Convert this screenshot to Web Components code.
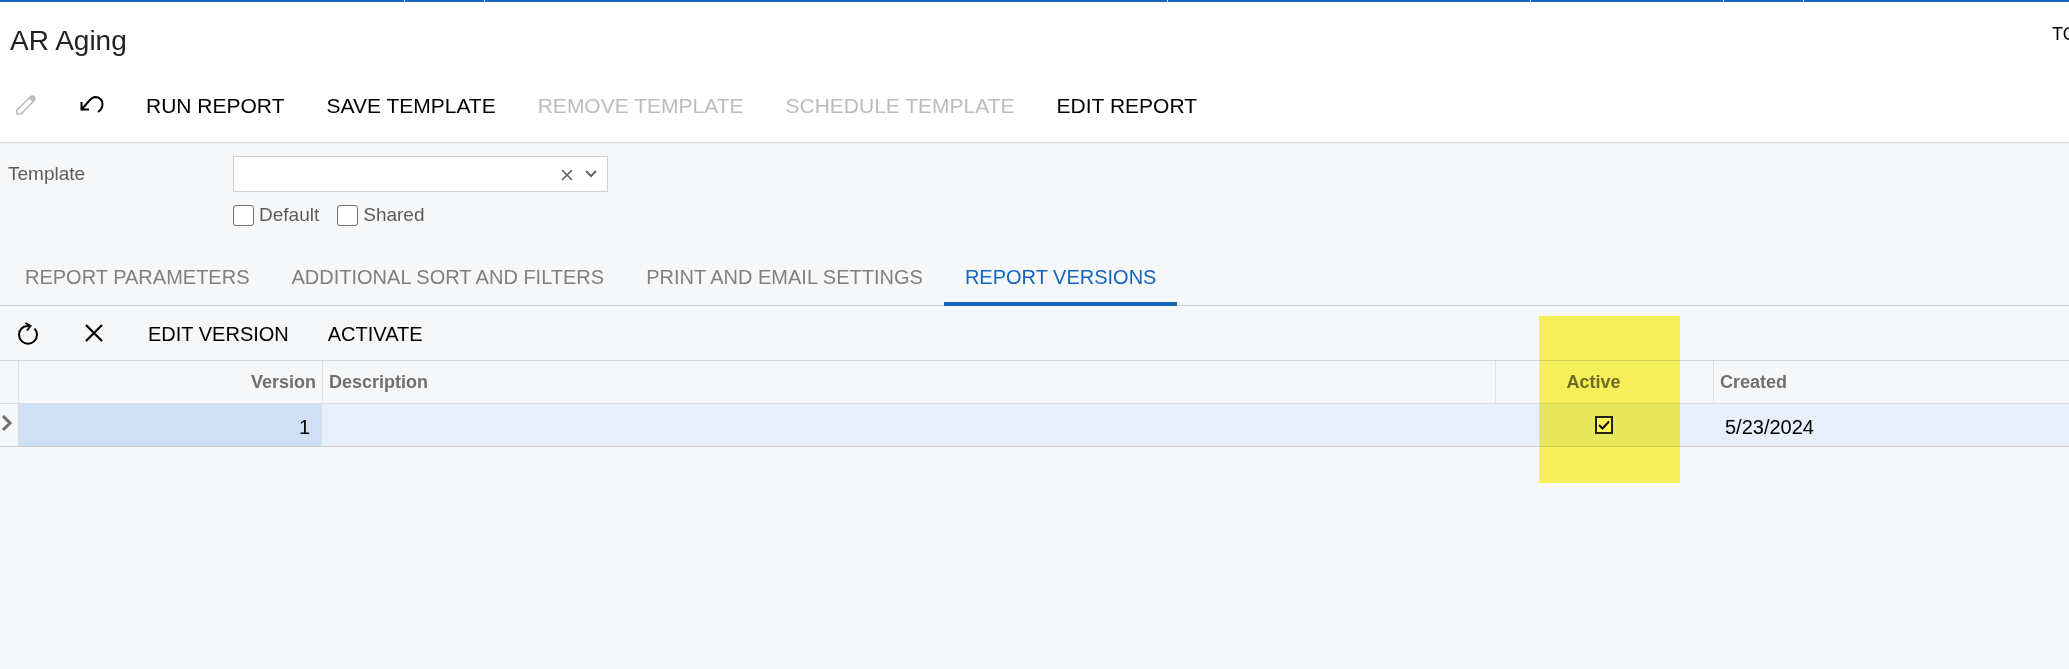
<!DOCTYPE html>
<html lang="en">
<head>
<meta charset="utf-8">
<title>AR Aging</title>
<style>
  html { height: 100%; }
  body {
    margin: 0; min-height: 100%; overflow-x: hidden;
    background: #f6f7f9; color: #000;
    font: 20px/24px "Liberation Sans", Arial, sans-serif;
  }
</style>
</head>
<body>
<report-screen></report-screen>
<script>
const define = (name, html, setup) => {
  const template = document.createElement('template');
  template.innerHTML = html;
  customElements.define(name, class extends HTMLElement {
    constructor() {
      super();
      this.attachShadow({ mode: 'open' }).append(template.content.cloneNode(true));
    }
    connectedCallback() { if (setup) setup(this, this.shadowRoot); }
  });
};

const icons = {
  pencil: '<path d="M1 19V15L14.500 1.800Q16.500 .200 18.200 1.800Q19.800 3.500 18.200 5.500L5 19Z" fill="none" stroke-width="1.600"/><path d="M13 3.300L15 1.300Q17 0 18.700 1.500Q20 3.500 18.700 5L16.700 7Z" stroke="none" fill="currentColor"/>',
  undo: '<path d="M1.500 6V13.500H9M2 13L9 5Q12 1.200 15.500 1A7 7 0 0 1 22.500 8Q22.500 13 18 16" fill="none" stroke-width="2"/>',
  refresh: '<path d="M12 4Q6 3.500 3.500 6.500A9 9 0 1 0 16.500 6.500M7.500 1L12.500 4L9 8.500" fill="none" stroke-width="2"/>',
  close: '<path d="M2 2L18 18M18 2L2 18" fill="none" stroke-width="2.200"/>'
};

define('app-strip', `
  <style>
    :host { display: grid; grid-template-columns: 405fr 79fr 684fr 363fr 193fr 79fr 266fr; column-gap: 1px; height: 2px; background: #d5e3f3; }
    i { background: #1365c0; }
  </style>
  <i></i><i></i><i></i><i></i><i></i><i></i><i></i>`);

define('screen-title', `
  <style>
    :host { display: flex; justify-content: space-between; align-items: flex-start; height: 66px; box-sizing: border-box; padding: 20px 0 0 10px; overflow: hidden; }
    h1 { margin: 2px 0 0; font-size: 28px; line-height: 34px; font-weight: 400; color: #222; }
    button { width: 17px; padding: 0; border: 0; background: none; font: 18px/24px "Liberation Sans", Arial, sans-serif; text-align: left; white-space: nowrap; overflow: hidden; }
    span { display: block; width: 0; }
  </style>
  <h1><slot></slot></h1>
  <button type="button"><span>TOOLS</span></button>`);

define('tool-button', `
  <style>
    :host { display: flex; }
    button { padding: 0; border: 0; background: none; font: inherit; color: #000; white-space: nowrap; cursor: pointer; }
    button:disabled { color: #bcbcbc; cursor: default; }
    svg { display: block; stroke: currentColor; overflow: visible; }
    :host([icon]) button { width: 52px; display: flex; justify-content: center; align-items: center; }
  </style>
  <button type="button"><slot></slot></button>`,
  (host, root) => {
    const button = root.querySelector('button');
    button.disabled = host.hasAttribute('disabled');
    const icon = host.getAttribute('icon');
    if (icon) {
      const [w, h] = host.getAttribute('box').split(' ');
      button.setAttribute('aria-label', host.getAttribute('label'));
      button.innerHTML = `<svg width="${w}" height="${h}" viewBox="0 0 ${w} ${h}" aria-hidden="true">${icons[icon]}</svg>`;
    }
  });

define('tool-bar', `
  <style>
    :host { display: flex; align-items: center; border-bottom: 1px solid #d2d4d6; }
    nav { display: flex; align-items: center; }
    .icons { gap: 14px; }
    .labels { gap: var(--label-gap, 42px); margin-left: 28px; padding-top: 2px; }
  </style>
  <nav class="icons" aria-label="Icon actions"><slot name="icon"></slot></nav>
  <nav class="labels" aria-label="Actions"><slot></slot></nav>`);

define('lookup-field', `
  <style>
    :host { display: flex; width: 375px; height: 36px; box-sizing: border-box; border: 1px solid #cfcfcf; background: #fff; align-items: center; padding: 2px 4px 0 0; }
    input { flex: 1; min-width: 0; border: 0; padding: 0 8px; background: none; font: inherit; outline: 0; }
    button { width: 24px; height: 24px; border: 0; padding: 0; background: none; display: flex; align-items: center; justify-content: center; color: #666; }
    svg { fill: none; stroke: currentColor; stroke-width: 2; }
  </style>
  <input type="text" aria-label="Template">
  <button type="button" aria-label="Clear"><svg width="12" height="12" viewBox="0 0 12 12"><path d="M1 1L11 11M11 1L1 11" stroke-width="1.700"/></svg></button>
  <button type="button" aria-label="Open list"><svg width="12" height="10" viewBox="0 0 12 10"><path d="M1 1L6 6L11 1"/></svg></button>`);

define('check-option', `
  <style>
    :host { display: block; }
    label { display: flex; align-items: center; gap: 5px; }
    input { appearance: none; margin: 0; width: 21px; height: 21px; box-sizing: border-box; border: 1px solid #707070; border-radius: 3px; background: #fff; }
  </style>
  <label><input type="checkbox"><slot></slot></label>`);

define('template-form', `
  <style>
    :host { display: grid; grid-template-columns: 225px auto; justify-content: start; row-gap: 11px; padding: 13px 8px 0; color: #5c5c5c; font-size: 19px; }
    .name { padding-top: 6px; }
    .options { grid-column: 2; display: flex; gap: 18px; }
  </style>
  <div class="name">Template</div>
  <lookup-field></lookup-field>
  <div class="options"><check-option>Default</check-option><check-option>Shared</check-option></div>`);

define('tab-item', `
  <style>
    :host { display: flex; }
    button { height: 100%; box-sizing: border-box; padding: 0 21px; border: 0; border-top: 4px solid transparent; border-bottom: 4px solid transparent; background: none; font: inherit; color: #808080; white-space: nowrap; }
    button[aria-selected=true] { color: #1365c0; border-bottom-color: #1067bb; }
  </style>
  <button type="button" role="tab"><slot></slot></button>`,
  (host, root) => root.querySelector('button').setAttribute('aria-selected', host.hasAttribute('selected')));

define('tab-strip', `
  <style>
    :host { display: flex; height: 58px; padding-left: 4px; font-size: 20px; box-shadow: inset 0 -1px #cfd2d5; }
  </style>
  <slot></slot>`);

define('version-grid', `
  <style>
    :host { display: block; }
    table { width: 100%; table-layout: fixed; border-spacing: 0; }
    .mark { width: 18px; } .version { width: 304px; } .active { width: 218px; } .created { width: 356px; }
    th, td { box-sizing: border-box; height: 43px; }
    th { padding: 0 6px; border-bottom: 1px solid #dadde0; font-size: 18px; color: #707070; text-align: left; }
    th + th { border-left: 1px solid #dfe1e4; }
    th.mark, td.mark { padding: 0; }
    td { padding: 3px 12px 0; border-bottom: 1px solid #ccd0d4; background: #e7effb; }
    td.mark { background: #f6f7f9; }
    td.mark svg { display: block; margin: 0 0 5px 1px; }
    .version { text-align: right; }
    td.version { background: #cfe0f5; }
    th.active { position: relative; text-align: center; padding-right: 28px; }
    td.active { padding: 0; }
    .check { display: grid; justify-content: center; }
    .check > * { grid-area: 1 / 1; }
    .check svg { pointer-events: none; }
    input { appearance: none; margin: 0; width: 18px; height: 18px; border: 2px solid #222; box-sizing: border-box; background: #fff; }
    mark { position: absolute; left: 43px; top: -45px; width: 141px; height: 167px; background: #fef75b; mix-blend-mode: multiply; pointer-events: none; }
  </style>
  <table>
    <thead><tr>
      <th class="mark"></th><th class="version">Version</th><th>Description</th>
      <th class="active">Active<mark></mark></th><th class="created">Created</th>
    </tr></thead>
    <tbody><tr>
      <td class="mark"><svg width="12" height="18" viewBox="0 0 12 18" fill="none" stroke="#707070" stroke-width="3"><path d="M2 2L9 9L2 16"/></svg></td>
      <td class="version">1</td><td></td>
      <td class="active"><div class="check"><input type="checkbox" checked aria-label="Active"><svg width="18" height="18" viewBox="0 0 18 18" fill="none" stroke="#111" stroke-width="2"><path d="M4 9L7.500 12.500L14 5.500"/></svg></div></td>
      <td class="created">5/23/2024</td>
    </tr></tbody>
  </table>`);

define('report-screen', `
  <style>
    :host { display: block; }
    header { background: #fff; }
    .main { height: 74px; font-size: 21px; }
    .grid-tools { height: 54px; padding-left: 2px; font-size: 20px; --label-gap: 39px; }
    tab-strip { margin-top: 21px; }
  </style>
  <header>
    <app-strip></app-strip>
    <screen-title>AR Aging</screen-title>
    <tool-bar class="main">
      <tool-button slot="icon" icon="pencil" box="20 20" label="Edit" disabled></tool-button>
      <tool-button slot="icon" icon="undo" box="24 18" label="Undo"></tool-button>
      <tool-button>RUN REPORT</tool-button>
      <tool-button>SAVE TEMPLATE</tool-button>
      <tool-button disabled>REMOVE TEMPLATE</tool-button>
      <tool-button disabled>SCHEDULE TEMPLATE</tool-button>
      <tool-button>EDIT REPORT</tool-button>
    </tool-bar>
  </header>
  <template-form></template-form>
  <tab-strip role="tablist">
    <tab-item>REPORT PARAMETERS</tab-item>
    <tab-item>ADDITIONAL SORT AND FILTERS</tab-item>
    <tab-item>PRINT AND EMAIL SETTINGS</tab-item>
    <tab-item selected>REPORT VERSIONS</tab-item>
  </tab-strip>
  <tool-bar class="grid-tools">
    <tool-button slot="icon" icon="refresh" box="20 22" label="Refresh"></tool-button>
    <tool-button slot="icon" icon="close" box="20 20" label="Delete"></tool-button>
    <tool-button>EDIT VERSION</tool-button>
    <tool-button>ACTIVATE</tool-button>
  </tool-bar>
  <version-grid></version-grid>`);
</script>
</body>
</html>
